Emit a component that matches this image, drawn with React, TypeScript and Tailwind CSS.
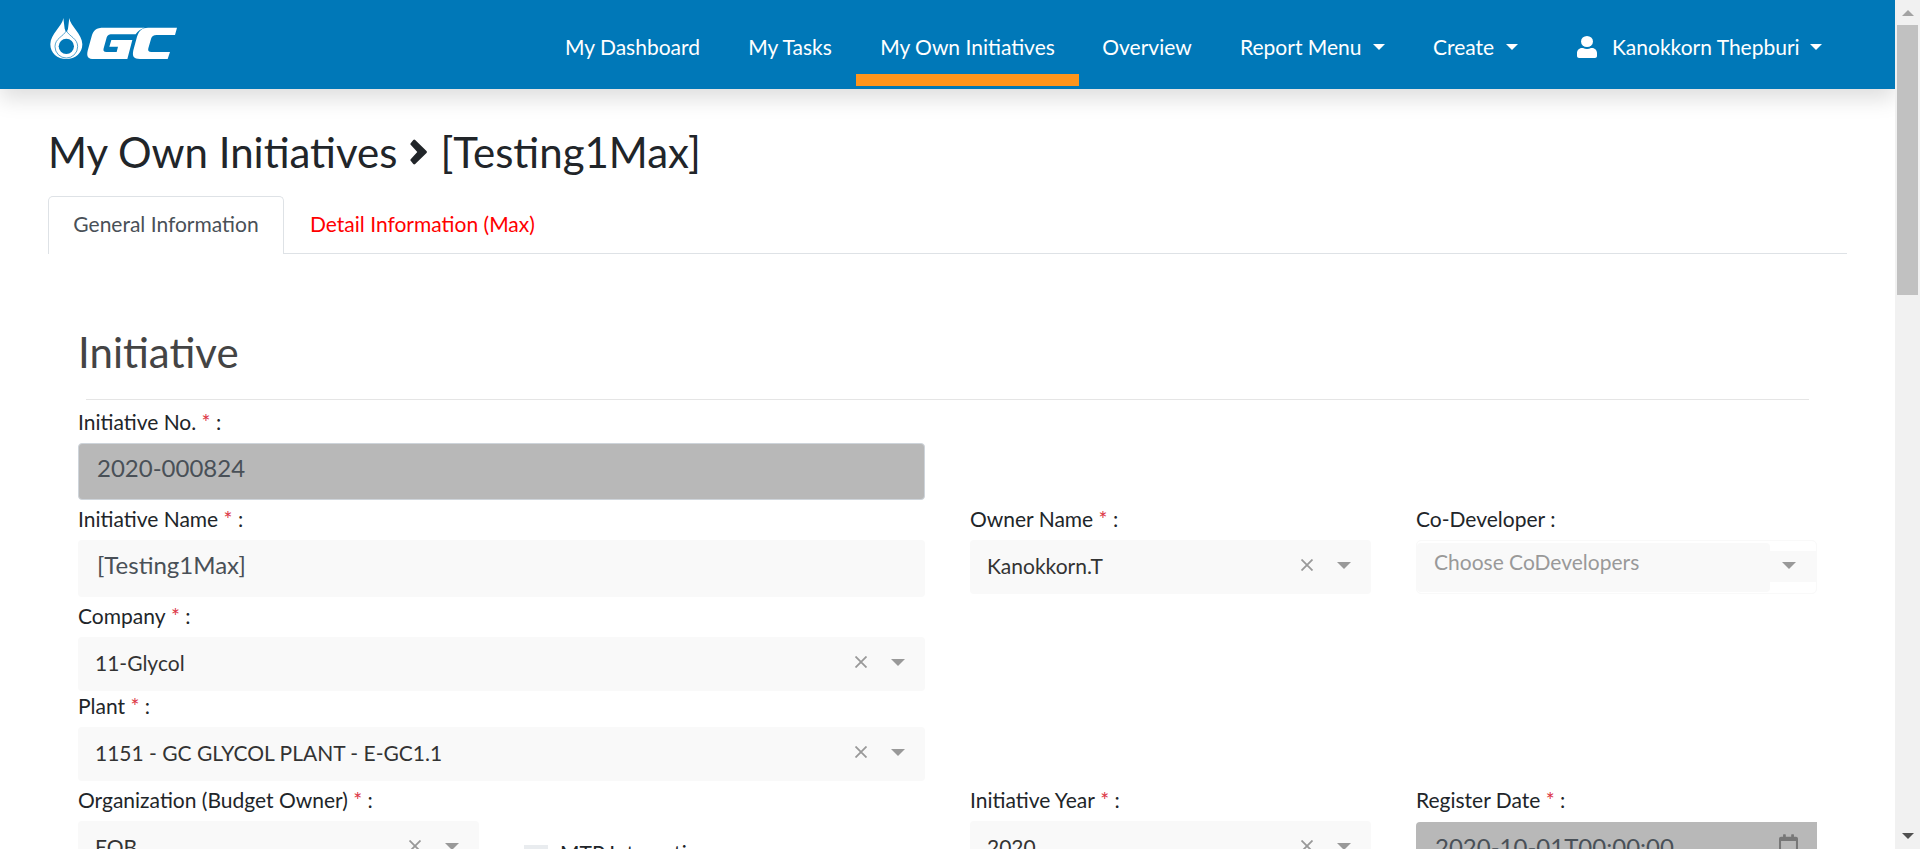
import { FaRegCalendar } from "react-icons/fa";

function Label({ text, required = true }: { text: string; required?: boolean }) {
  return (
    <label className="flex h-9 items-start whitespace-pre text-[21px] leading-[30px] text-[#212529]">
      {text}
      {required && <span className="text-[#dc3545]"> *</span>}
      {" :"}
    </label>
  );
}

function Caret() {
  return <span className="mb-px h-0 w-0 border-x-[7.5px] border-t-[7px] border-x-transparent border-t-[#999]" />;
}

function Select({ value }: { value: string }) {
  return (
    <div className="flex h-[54px] items-center rounded-[4px] bg-[#f9f9f9] pr-5 pb-[3px] pl-[17px] text-[21px] text-[#333]">
      <span className="grow whitespace-nowrap">{value}</span>
      <svg className="mr-6 mb-px h-3 w-3" viewBox="0 0 12 12" stroke="#999" strokeWidth="1.8">
        <path d="M0.5 0.5 11.5 11.5M11.5 0.5 0.5 11.5" />
      </svg>
      <Caret />
    </div>
  );
}

function NavCaret() {
  return <span className="ml-3 h-0 w-0 border-x-[6.5px] border-t-[6px] border-x-transparent border-t-white" />;
}

function Logo() {
  return (
    <svg className="h-[60px] w-[150px]" viewBox="0 0 450 180" fill="#fff">
      <path d="M70 24C68 48 31 72 31 103C31 130 52 147 79 147C106 147 127 130 127 103C127 72 90 48 88 24L84 56L79 66L74 56Z" />
      <path d="M79 28V62" stroke="#0078b8" strokeWidth="6" />
      <path d="M79 62C70 80 45 85 45 110A34 34 0 0 0 113 110C113 85 88 80 79 62Z" fill="none" stroke="#0078b8" strokeWidth="3" opacity="0.65" />
      <circle cx="79" cy="109" r="23" fill="#0078b8" />
      <path d="M314 53H192C168 53 160 60 155 79L143 122C139 140 144 147 163 147H262L277 90H214L208 110H234L230 126H199C191 126 189 123 191 115L199 86C202 76 206 73 215 73H287C293 64 300 58 314 53Z" />
      <path d="M411 53H324C306 53 297 62 291 80L280 121C276 140 281 147 300 147H383L390 126H334C326 126 323 123 325 115L333 87C336 78 340 75 350 75H405Z" />
    </svg>
  );
}

export default function App() {
  return (
    <div className="flex h-[849px] w-[1920px] overflow-hidden bg-white font-['Lato',sans-serif] text-[#212529]">
      <div className="flex w-[1895px] shrink-0 flex-col overflow-hidden">
        <header className="flex h-[89px] shrink-0 bg-[#0078b8] pl-10 text-[21px] text-white shadow-[0_10px_20px_rgba(0,0,0,0.13)]">
          <div className="w-[501px] pt-[10px]"><Logo /></div>
          <nav className="flex h-[86px] whitespace-nowrap">
            <a className="flex w-[183px] items-center justify-center pt-2">My Dashboard</a>
            <a className="flex w-[132px] items-center justify-center pt-2">My Tasks</a>
            <a className="flex w-[223px] items-center justify-center border-b-[12px] border-[#ff951c] pt-5">My Own Initiatives</a>
            <a className="flex w-[136px] items-center justify-center pt-2">Overview</a>
            <a className="flex w-[193px] items-center pt-2 pl-[25px]">Report Menu<NavCaret /></a>
            <a className="flex w-[169px] items-center pt-2 pl-[25px]">Create<NavCaret /></a>
            <a className="flex items-center pt-2">
              <svg className="mr-[15px] h-[22px] w-5" viewBox="0 0 20 22" fill="#fff">
                <ellipse cx="10" cy="5.500" rx="6" ry="5.500" />
                <path d="M5 12H6C8.500 13.300 11.500 13.300 14 12H15C18 12 20 14.500 20 17V20C20 21.200 19 22 18 22H2C1 22 0 21.200 0 20V17C0 14.500 2 12 5 12Z" />
              </svg>
              Kanokkorn Thepburi
              <span className="-ml-[2px]"><NavCaretBox /></span>
            </a>
          </nav>
        </header>
        <main className="flex flex-col px-12">
          <h1 className="mt-[39px] flex h-12 items-center text-[42px] leading-[48px]">
            My Own Initiatives
            <svg className="mr-[13px] ml-[13px] h-[26px] w-[17px]" viewBox="0 0 17 26" fill="#212529">
              <path d="M0.700 4.200 3.300 0.900Q4.200 0 5.200 0.900L16.500 12Q17.300 13 16.500 14L5.200 25.100Q4.200 26 3.300 25.100L0.700 21.800Q0 21 0.700 20.200L7.300 13 0.700 5.800Q0 5 0.700 4.200Z" />
            </svg>
            [Testing1Max]
          </h1>
          <div className="mt-5 flex h-[58px] border-b border-[#dee2e6] text-[21px]">
            <div className="flex h-[58px] w-[236px] items-center justify-center rounded-t-[5px] border border-b-0 border-[#dee2e6] bg-white pb-1 text-[#495057]">General Information</div>
            <div className="flex items-center pb-[2px] pl-[26px] text-[#f00]">Detail Information (Max)</div>
          </div>
          <section className="flex flex-col px-[30px] pt-[74px]">
            <h2 className="h-12 text-[42px] leading-[48px] text-[#444]">Initiative</h2>
            <hr className="mx-2 mt-[23px] mb-[7px] border-[#e5e5e5]" />
            <div className="flex justify-between">
              <div className="flex w-[847px] flex-col">
                <Label text="Initiative No." />
                <div className="flex h-[57px] items-center rounded-[4px] border border-[#ced4da] bg-[#b8b8b8] pb-[7px] pl-[18px] text-[24px] text-[#495057]">2020-000824</div>
                <div className="h-1" />
                <Label text="Initiative Name" />
                <div className="flex h-[57px] items-center rounded-[4px] bg-[#f9f9f9] pb-[7px] pl-[19px] text-[24px] text-[#495057]">[Testing1Max]</div>
                <div className="h-1" />
                <Label text="Company" />
                <Select value="11-Glycol" />
                <Label text="Plant" />
                <Select value="1151 - GC GLYCOL PLANT - E-GC1.1" />
                <div className="h-1" />
                <Label text="Organization (Budget Owner)" />
                <div className="flex">
                  <div className="w-[401px]"><Select value="EOB" /></div>
                  <div className="ml-[45px] flex pt-[17px] text-[21px] leading-[30px]">
                    <span className="mt-[7px] mr-3 h-6 w-6 bg-[#e9ecef]" />
                    MTP Integration
                  </div>
                </div>
              </div>
              <div className="flex w-[847px] flex-col pt-[97px]">
                <div className="flex justify-between">
                  <div className="w-[401px]"><Label text="Owner Name" /><Select value="Kanokkorn.T" /></div>
                  <div className="w-[401px]">
                    <Label text="Co-Developer" required={false} />
                    <div className="flex h-[54px] items-center rounded-[5px] border border-[#f9f9f9]">
                      <div className="flex h-[49px] w-[353px] rounded-[4px] bg-[#f9f9f9] pt-1 pl-[17px] text-[21px] leading-[30px] text-[#999]">Choose CoDevelopers</div>
                      <div className="mb-px flex h-[31px] grow items-center bg-[#f9f9f9] pb-px pl-3"><Caret /></div>
                    </div>
                  </div>
                </div>
                <div className="mt-[191px] flex justify-between">
                  <div className="w-[401px]"><Label text="Initiative Year" /><Select value="2020" /></div>
                  <div className="w-[401px]">
                    <Label text="Register Date" />
                    <div className="mt-px flex h-[57px] items-center justify-between rounded-l-[4px] bg-[#b8b8b8] pr-[19px] pb-[7px] pl-[19px] text-[24px] text-[#495057]">
                      2020-10-01T00:00:00
                      <FaRegCalendar className="mt-3 h-[22px] w-[19px] self-start text-[#777]" />
                    </div>
                  </div>
                </div>
              </div>
            </div>
          </section>
        </main>
      </div>
      <aside className="flex w-[25px] flex-col items-center bg-[#f1f1f1] pt-[10px] pb-[10px]">
        <span className="h-0 w-0 border-x-[6px] border-b-[6px] border-x-transparent border-b-[#a3a3a3]" />
        <div className="mt-[9px] h-[270px] w-[21px] bg-[#c1c1c1]" />
        <span className="mt-auto h-0 w-0 border-x-[6px] border-t-[6px] border-x-transparent border-t-[#505050]" />
      </aside>
    </div>
  );
}

function NavCaretBox() {
  return <span className="flex"><NavCaret /></span>;
}
